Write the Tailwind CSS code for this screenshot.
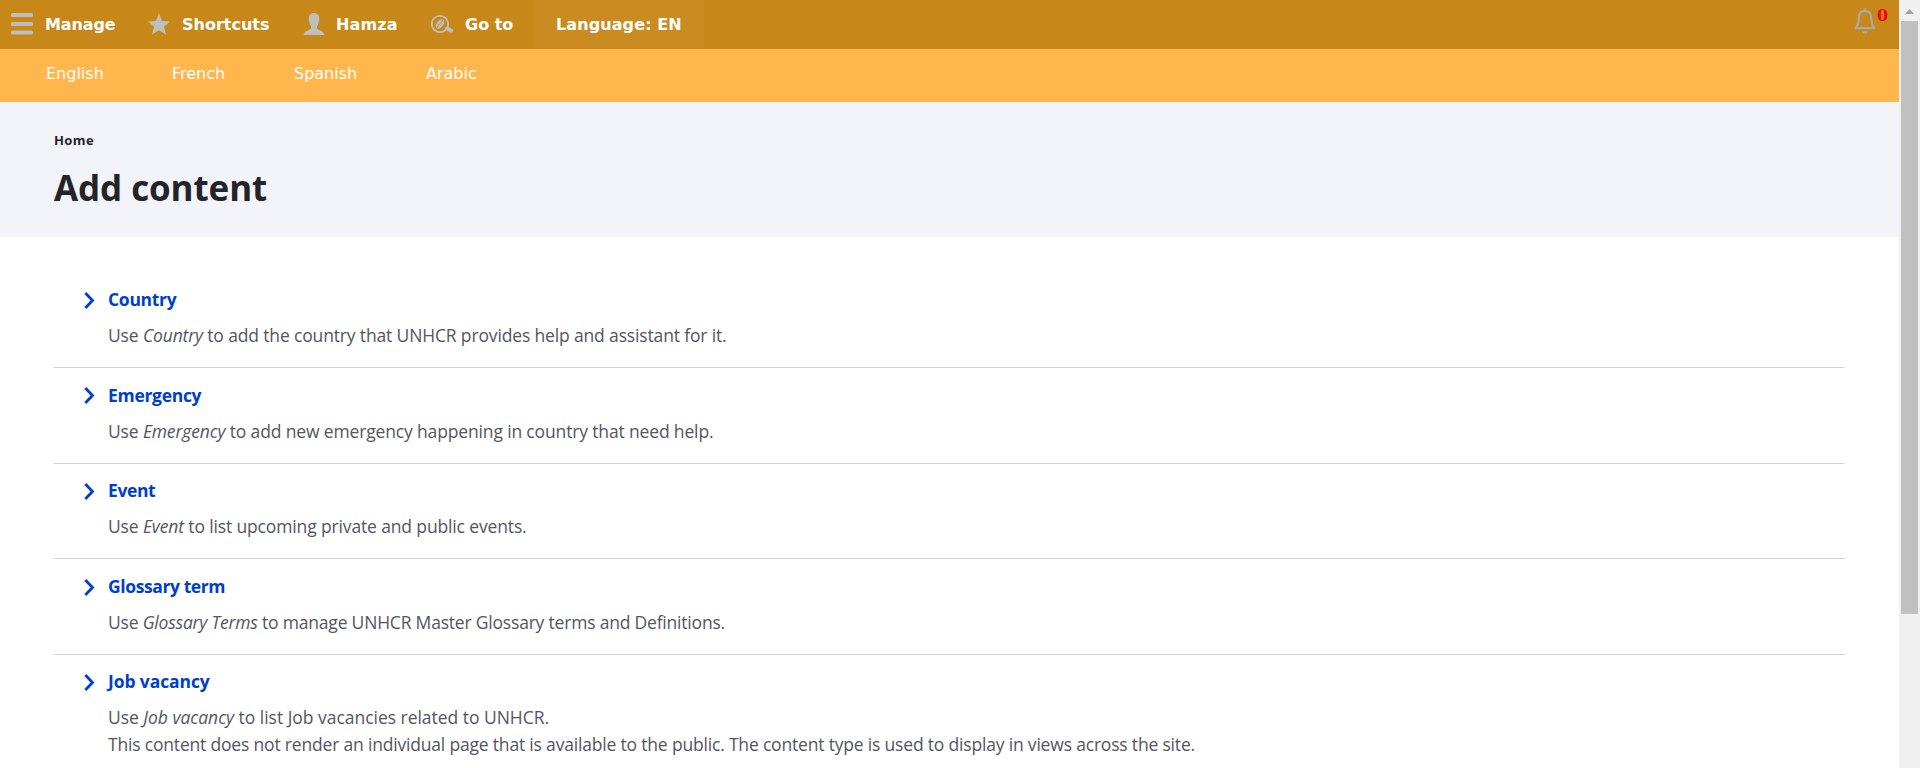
<!DOCTYPE html>
<html lang="en">
<head>
<meta charset="utf-8">
<title>Add content</title>
<script src="https://cdn.jsdelivr.net/npm/@tailwindcss/browser@4"></script>
</head>
<body class="flex h-[768px] overflow-hidden bg-white font-['Open_Sans',sans-serif] text-[#232429]">
<div class="flex w-[1899px] shrink-0 flex-col">
  <nav class="flex h-[49px] shrink-0 bg-[#c78819] font-['DejaVu_Sans',sans-serif] text-[16px] leading-[49px] font-bold text-white">
    <a class="flex w-[137px] pl-[11px]">
      <svg class="mt-[13px] mr-[12px] h-[22px] w-[22px] shrink-0 fill-[#bebebe]" viewBox="0 0 22 22"><rect width="22" height="4" rx="1.5"/><rect y="9" width="22" height="4" rx="1.5"/><rect y="17.5" width="22" height="4" rx="1.5"/></svg>
      <span class="tracking-[-0.1px]">Manage</span>
    </a>
    <a class="flex w-[155px] pl-[11px]">
      <svg class="mt-[13px] mr-[12px] h-[22px] w-[22px] shrink-0 fill-[#bebebe]" viewBox="0 0 22 22"><path d="M11 0l3 7.9 8 .6-6.2 5.2 2.5 8L11 17.300l-7.300 4.400 2.500-8L0 8.500l8-.6z"/></svg>
      <span>Shortcuts</span>
    </a>
    <a class="flex w-[128px] pl-[11px]">
      <svg class="mt-[13px] mr-[11px] h-[22px] w-[22px] shrink-0 fill-[#bebebe]" viewBox="0 0 22 22"><path d="M11 0c3.500 0 5.200 2.300 5.200 5.500 0 3-.8 6-2.200 7.800-.5 1.500-.2 2.500 1 3.200 2.500 1.200 6 1.800 6.400 5.500H.6c.4-3.700 3.900-4.300 6.400-5.500 1.200-.7 1.500-1.700 1-3.200C6.600 11.500 5.800 8.500 5.800 5.500 5.800 2.300 7.500 0 11 0z"/></svg>
      <span class="tracking-[0.15px]">Hamza</span>
    </a>
    <a class="flex w-[115px] pl-[11px]">
      <svg class="mt-[14px] mr-[12px] h-[20px] w-[22px] shrink-0" viewBox="0 0 22 20" fill="none" stroke="#bebebe"><circle cx="9" cy="10" r="8.200" stroke-width="1.800"/><path d="M16 14.500l4.200 2" stroke-width="4" stroke-linecap="round"/><ellipse cx="9" cy="10" rx="3.300" ry="5.500" transform="rotate(40 9 10)" fill="#bebebe" stroke="none"/><path d="M12.300 5.500C11 8.500 7.500 10 5.800 14.300" stroke="#c78819" stroke-width="1"/></svg>
      <span>Go to</span>
    </a>
    <a class="w-[169px] bg-[#ca8c21] pl-[21px] tracking-[0.1px]">Language: EN</a>
    <div class="ml-auto flex pr-[12px]">
      <svg class="mt-[8px] h-[26px] w-[22px]" viewBox="0 0 22 26" fill="none" stroke="#a9a9a9" stroke-width="2.200"><path d="M11 2.800C6.500 2.800 4.800 6 4.800 10c0 5-.8 7.500-3.300 10.200h19C18 17.500 17.200 15 17.200 10c0-4-1.700-7.200-6.200-7.200z" stroke-linejoin="round"/><path d="M9.700 3V1.500a1.300 1.300 0 012.600 0V3zM8 23.200h6c-.6 1.700-1.600 2.500-3 2.500s-2.400-.8-3-2.500z" fill="#a9a9a9" stroke="none"/></svg>
      <span class="mt-[6px] ml-[1px] w-[10px] font-['DejaVu_Serif',serif] text-[16px] leading-[20px] font-bold text-[#ff0000]">0</span>
    </div>
  </nav>
  <nav class="flex h-[53px] shrink-0 bg-[#ffb64d] pl-[46px] font-['DejaVu_Sans',sans-serif] text-[16px] leading-[49px] text-white">
    <a class="w-[126px]">English</a><a class="w-[122px]">French</a><a class="w-[132px]">Spanish</a><a>Arabic</a>
  </nav>
  <header class="h-[135px] shrink-0 bg-[#f3f4f9] px-[54px] pt-[30px]">
    <div class="text-[13px] leading-[17px] font-bold tracking-[0.4px]">Home</div>
    <h1 class="mt-[15px] text-[35px] leading-[47px] font-bold tracking-[-0.1px]">Add content</h1>
  </header>
  <main class="px-[54px] pt-[35px]">
    <ul class="text-[17.5px] leading-[27px] text-[#545560]">
      <li class="flex h-[96px] border-b border-[#d3d4d9] pt-[14px]">
        <svg class="mt-[6px] mr-[13px] ml-[30px] h-[17px] w-[11px] shrink-0" viewBox="0 0 11 17" fill="none" stroke="#003ecc" stroke-width="2.800"><path d="M1.300 1l7.200 7.500L1.300 16"/></svg>
        <div><a class="block font-bold tracking-[-0.3px] text-[#003ecc]">Country</a><p class="mt-[9px] tracking-[-0.15px]">Use <em>Country</em> to add the country that UNHCR provides help and assistant for it.</p></div>
      </li>
      <li class="flex h-[96px] border-b border-[#d3d4d9] pt-[14px]">
        <svg class="mt-[5px] mr-[13px] ml-[30px] h-[17px] w-[11px] shrink-0" viewBox="0 0 11 17" fill="none" stroke="#003ecc" stroke-width="2.800"><path d="M1.300 1l7.200 7.500L1.300 16"/></svg>
        <div><a class="block font-bold tracking-[-0.3px] text-[#003ecc]">Emergency</a><p class="mt-[9px] tracking-[-0.15px]">Use <em>Emergency</em> to add new emergency happening in country that need help.</p></div>
      </li>
      <li class="flex h-[95px] border-b border-[#d3d4d9] pt-[13px]">
        <svg class="mt-[6px] mr-[13px] ml-[30px] h-[17px] w-[11px] shrink-0" viewBox="0 0 11 17" fill="none" stroke="#003ecc" stroke-width="2.800"><path d="M1.300 1l7.200 7.500L1.300 16"/></svg>
        <div><a class="block font-bold tracking-[-0.4px] text-[#003ecc]">Event</a><p class="mt-[9px] tracking-[-0.14px]">Use <em>Event</em> to list upcoming private and public events.</p></div>
      </li>
      <li class="flex h-[96px] border-b border-[#d3d4d9] pt-[14px]">
        <svg class="mt-[6px] mr-[13px] ml-[30px] h-[17px] w-[11px] shrink-0" viewBox="0 0 11 17" fill="none" stroke="#003ecc" stroke-width="2.800"><path d="M1.300 1l7.200 7.500L1.300 16"/></svg>
        <div><a class="block font-bold tracking-[-0.4px] text-[#003ecc]">Glossary term</a><p class="mt-[9px] tracking-[-0.2px]">Use <em>Glossary Terms</em> to manage UNHCR Master Glossary terms and Definitions.</p></div>
      </li>
      <li class="flex pt-[13px]">
        <svg class="mt-[6px] mr-[13px] ml-[30px] h-[17px] w-[11px] shrink-0" viewBox="0 0 11 17" fill="none" stroke="#003ecc" stroke-width="2.800"><path d="M1.300 1l7.200 7.500L1.300 16"/></svg>
        <div><a class="block font-bold tracking-[-0.1px] text-[#003ecc]">Job vacancy</a><p class="mt-[9px] tracking-[-0.185px]"><span class="tracking-[-0.03px]">Use <em>Job vacancy</em> to list Job vacancies related to UNHCR.</span><br>This content does not render an individual page that is available to the public. The content type is used to display in views across the site.</p></div>
      </li>
    </ul>
  </main>
</div>
<div class="flex w-[21px] shrink-0 flex-col bg-[#f0f0f0] pl-[2px]">
  <svg class="mt-[9px] ml-[4px] h-[5px] w-[9px] fill-[#a3a3a3]" viewBox="0 0 9 5"><path d="M4.500 0L9 5H0z"/></svg>
  <div class="mt-[7px] h-[593px] w-[17px] bg-[#c0c0c0]"></div>
</div>
</body>
</html>
